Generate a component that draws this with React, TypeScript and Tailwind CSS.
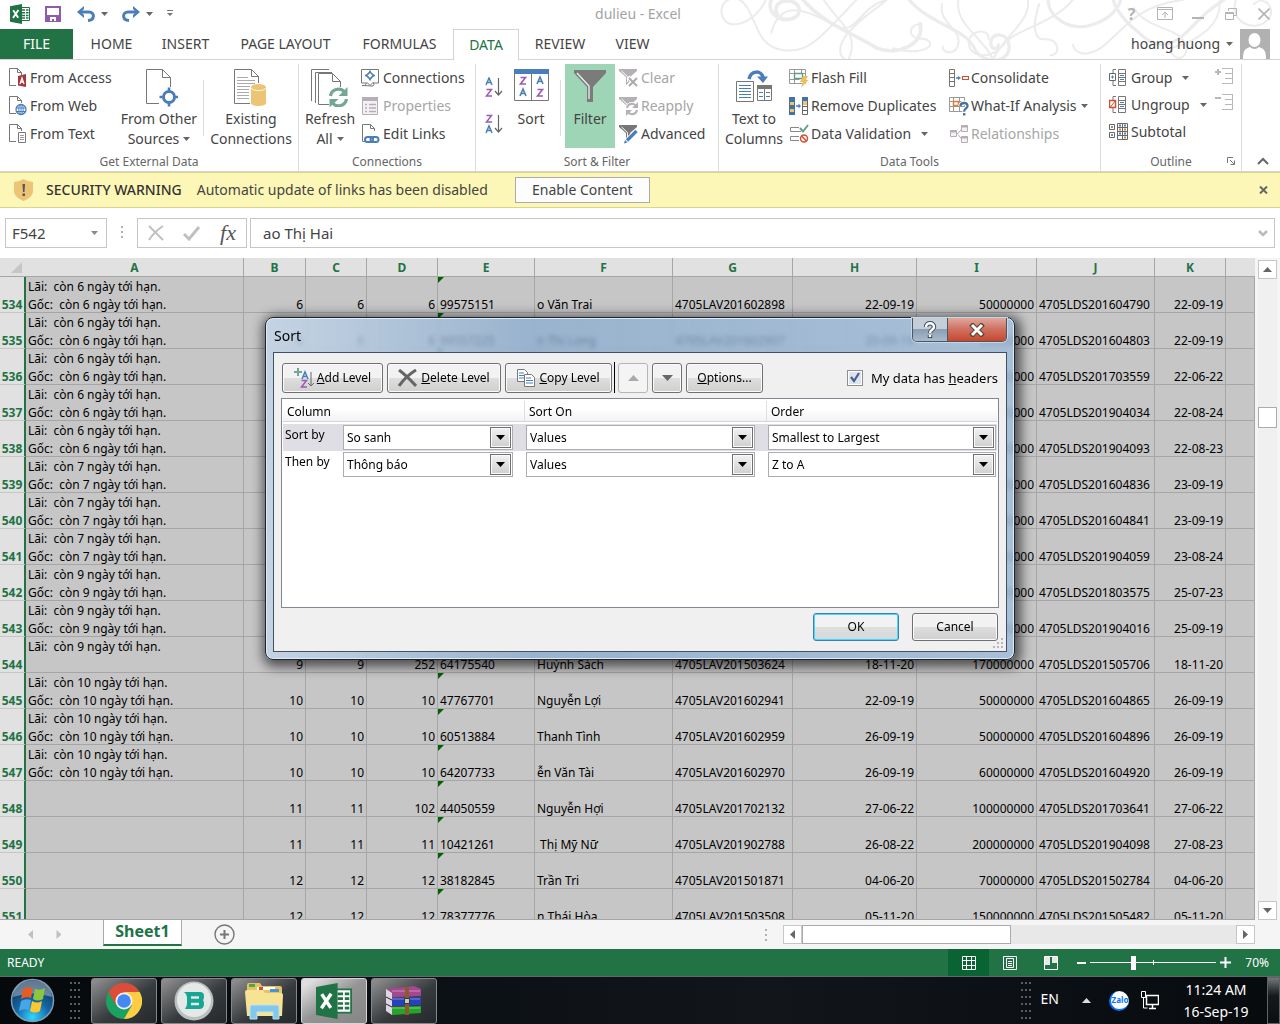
import type { ReactNode } from 'react';

interface SheetRow {
  n: number;
  days?: number;
  only?: boolean;
  cells: string[];
}

const columns = [
  { name: 'A', width: 'w-[218px]' },
  { name: 'B', width: 'w-[62px]' },
  { name: 'C', width: 'w-[61px]' },
  { name: 'D', width: 'w-[71px]' },
  { name: 'E', width: 'w-[97px]' },
  { name: 'F', width: 'w-[138px]' },
  { name: 'G', width: 'w-[120px]' },
  { name: 'H', width: 'w-[124px]' },
  { name: 'I', width: 'w-[120px]' },
  { name: 'J', width: 'w-[118px]' },
  { name: 'K', width: 'w-[71px]' },
];

// Columns B, C, D, H, I and K hold numbers and dates
const rightAligned = [true, true, true, false, false, false, true, true, false, true];

const rows: SheetRow[] = [
  { n: 534, days: 6, cells: ['6', '6', '6', '99575151', 'o Văn Trai', '4705LAV201602898', '22-09-19', '50000000', '4705LDS201604790', '22-09-19'] },
  { n: 535, days: 6, cells: ['6', '6', '6', '99557225', 'n Thị Long', '4705LAV201602907', '20-09-19', '50000000', '4705LDS201604803', '22-09-19'] },
  { n: 536, days: 6, cells: ['', '', '', '', '', '', '', '50000000', '4705LDS201703559', '22-06-22'] },
  { n: 537, days: 6, cells: ['', '', '', '', '', '', '', '50000000', '4705LDS201904034', '22-08-24'] },
  { n: 538, days: 6, cells: ['', '', '', '', '', '', '', '50000000', '4705LDS201904093', '22-08-23'] },
  { n: 539, days: 7, cells: ['', '', '', '', '', '', '', '50000000', '4705LDS201604836', '23-09-19'] },
  { n: 540, days: 7, cells: ['', '', '', '', '', '', '', '50000000', '4705LDS201604841', '23-09-19'] },
  { n: 541, days: 7, cells: ['', '', '', '', '', '', '', '50000000', '4705LDS201904059', '23-08-24'] },
  { n: 542, days: 9, cells: ['', '', '', '', '', '', '', '50000000', '4705LDS201803575', '25-07-23'] },
  { n: 543, days: 9, cells: ['', '', '', '', '', '', '', '50000000', '4705LDS201904016', '25-09-19'] },
  { n: 544, days: 9, only: true, cells: ['9', '9', '252', '64175540', 'Huỳnh Sách', '4705LAV201503624', '18-11-20', '170000000', '4705LDS201505706', '18-11-20'] },
  { n: 545, days: 10, cells: ['10', '10', '10', '47767701', 'Nguyễn Lợi', '4705LAV201602941', '22-09-19', '50000000', '4705LDS201604865', '26-09-19'] },
  { n: 546, days: 10, cells: ['10', '10', '10', '60513884', 'Thanh Tình', '4705LAV201602959', '26-09-19', '50000000', '4705LDS201604896', '26-09-19'] },
  { n: 547, days: 10, cells: ['10', '10', '10', '64207733', 'ễn Văn Tài', '4705LAV201602970', '26-09-19', '60000000', '4705LDS201604920', '26-09-19'] },
  { n: 548, cells: ['11', '11', '102', '44050559', 'Nguyễn Hợi', '4705LAV201702132', '27-06-22', '100000000', '4705LDS201703641', '27-06-22'] },
  { n: 549, cells: ['11', '11', '11', '10421261', ' Thị Mỹ Nữ', '4705LAV201902788', '26-08-22', '200000000', '4705LDS201904098', '27-08-23'] },
  { n: 550, cells: ['12', '12', '12', '38182845', 'Trần Tri', '4705LAV201501871', '04-06-20', '70000000', '4705LDS201502784', '04-06-20'] },
  { n: 551, cells: ['12', '12', '12', '78377776', 'n Thái Hòa', '4705LAV201503508', '05-11-20', '150000000', '4705LDS201505482', '05-11-20'] },
];

/* ---------- icons ---------- */

const Caret = ({ className = 'text-[#666]' }: { className?: string }) => (
  <svg width="7" height="4" viewBox="0 0 7 4" className={`inline-block shrink-0 ${className}`}>
    <path d="M0 0h7L3.5 4z" fill="currentColor" />
  </svg>
);

const ExcelIcon = ({ size }: { size: number }) => (
  <svg width={size} height={size} viewBox="0 0 20 20">
    <path d="M10.5 3.5h9v13h-9z" fill="#fff" stroke="#217346" />
    <path d="M12 6h3M16 6h2.5M12 8.7h3M16 8.7h2.5M12 11.4h3M16 11.4h2.5M12 14h3M16 14h2.5" stroke="#217346" strokeWidth="1.5" />
    <path d="M0 2.2 12 0v20L0 17.8z" fill="#217346" />
    <path d="M3.2 6.2 8.2 13.8M8.4 6 3 14" stroke="#fff" strokeWidth="1.9" />
  </svg>
);

const SmallDoc = ({ children }: { children?: ReactNode }) => (
  <svg width="19" height="20" viewBox="0 0 19 20" fill="none">
    <path d="M8 17.5H1.5V.5h8l4 4V7M9.5.5v4h4" stroke="#777" />
    {children}
  </svg>
);

const AccessIcon = () => (
  <SmallDoc>
    <path d="m10 8 8-2v13l-8-1.500z" fill="#a4373a" />
    <path d="m12 16 2-6 2 6M13 14h2.500" stroke="#fff" strokeWidth="1.300" />
  </SmallDoc>
);

const WebIcon = () => (
  <SmallDoc>
    <circle cx="13" cy="13.500" r="5" fill="#fff" stroke="#4a7ebb" strokeWidth="1.300" />
    <ellipse cx="13" cy="13.500" rx="2.200" ry="5" stroke="#4a7ebb" />
    <path d="M8 12h10M8 15.500h10M13 8.500v10" stroke="#4a7ebb" />
  </SmallDoc>
);

const TextIcon = () => (
  <SmallDoc>
    <path d="M10.500 8.500h7v10h-7z" fill="#fff" stroke="#777" />
    <path d="M12 11.500h4M12 13.500h4M12 15.500h4" stroke="#999" />
  </SmallDoc>
);

const OtherSourcesIcon = () => (
  <svg width="38" height="38" viewBox="0 0 38 38" fill="none">
    <path d="M19 34.500H6.500V.5h16l8 8V18M22.500.5v8h8" stroke="#777" />
    <path d="M29 18.500v19M19.500 28h19" stroke="#4a7ebb" strokeWidth="2.600" />
    <circle cx="29" cy="28" r="5.500" fill="#fff" stroke="#4a7ebb" strokeWidth="3" />
  </svg>
);

const ExistingIcon = () => (
  <svg width="34" height="38" viewBox="0 0 34 38" fill="none">
    <path d="M16 34.500H.5V.5h17l7 7V14M17.500.5v7h7" stroke="#777" />
    <path d="M3 8.500h11M3 11.500h18M3 14.500h18M3 17.500h13M3 20.500h12M3 23.500h12M3 26.500h12M3 29.500h12" stroke="#aaa" />
    <path d="M17 18v16c0 4 15 4 15 0V18" fill="#ebc476" />
    <ellipse cx="24.500" cy="18" rx="7.500" ry="3" fill="#ebc476" />
    <path d="M17 19c2 3.500 13 3.500 15 0" stroke="#fff6df" />
  </svg>
);

const RefreshIcon = () => (
  <svg width="38" height="38" viewBox="0 0 38 38" fill="none">
    <path d="M.5 32V.5H18M4.500 34V3.500H21" stroke="#777" />
    <path d="M18 35.500H7.500v-31h14l8 8V18M21.500 4.500v8h8" stroke="#777" />
    <path d="M19.500 27a8 8 0 0 1 14-4M35.500 30a8 8 0 0 1-14 4" stroke="#72a893" strokeWidth="3.200" />
    <path d="M36.500 18v9h-9zM18.500 38.500v-8.500h9z" fill="#72a893" />
  </svg>
);

const ConnectionsIcon = () => (
  <svg width="18" height="18" viewBox="0 0 18 18" fill="none">
    <path d="M.5 14V.5h17V14H12M5 14H.5" stroke="#777" />
    <path d="m9 3 3.500 3.500L9 10 5.500 6.500z" fill="#fff" stroke="#4a7ebb" strokeWidth="1.600" />
    <path d="M9 1.500v2M9 9.500v2M4 6.500h2M12 6.500h2" stroke="#4a7ebb" strokeWidth="1.500" />
    <path d="M1 16.500h3l2-3 3 3 3-3 1 2-1 1.500z" stroke="#777" />
  </svg>
);

const PropertiesIcon = () => (
  <svg width="18" height="18" viewBox="0 0 18 18" fill="none">
    <path d="M1.500.5h15v17h-15z" fill="#f6f0f6" stroke="#b5aeb5" />
    <path d="M1 0h16v4H1z" fill="#b5aeb5" />
    <path d="M8 7.500h7M8 11h7M8 14.500h7M4 7.500h2M4 11h2M4 14.500h2" stroke="#b5aeb5" strokeWidth="1.500" />
  </svg>
);

const EditLinksIcon = () => (
  <SmallDoc>
    <rect x="4" y="13" width="8" height="5" rx="2.500" fill="#fff" stroke="#4a7ebb" strokeWidth="2" />
    <rect x="9.500" y="13" width="8" height="5" rx="2.500" stroke="#4a7ebb" strokeWidth="2" />
  </SmallDoc>
);

const letterA = 'm1 8 3-7 3 7M2 5.500h4';
const letterZ = 'M1.500 1.500h5l-5 6.500h5.500';

const SortIcon = ({ desc }: { desc?: boolean }) => (
  <svg width="18" height="20" viewBox="0 0 18 20" fill="none">
    <g strokeWidth="1.500">
      <path d={desc ? letterZ : letterA} stroke={desc ? '#9b59b6' : '#4a7ebb'} />
      <path d={desc ? letterA : letterZ} transform="translate(0 11)" stroke={desc ? '#4a7ebb' : '#9b59b6'} />
    </g>
    <path d="M13.500 1v17M10 14l3.500 4 3.500-4" stroke="#666" strokeWidth="1.200" />
  </svg>
);

const BigSortIcon = () => (
  <svg width="35" height="32" viewBox="0 0 35 32" fill="none">
    <path d="M.5 2.500h34v29H.5zM17.500 5v26" stroke="#777" />
    <path d="M0 0h35v5H0z" fill="#4a7ebb" />
    <g strokeWidth="1.600">
      <path d={letterZ} transform="translate(5 7)" stroke="#9b59b6" />
      <path d={letterA} transform="translate(5 19)" stroke="#4a7ebb" />
      <path d={letterA} transform="translate(22 7)" stroke="#4a7ebb" />
      <path d={letterZ} transform="translate(22 19)" stroke="#9b59b6" />
    </g>
  </svg>
);

const FilterIcon = () => (
  <svg width="34" height="34" viewBox="0 0 34 34">
    <path d="M1 1h32v3L20 18v15h-6V18L1 4z" fill="#7b7b7b" />
    <path d="m4 4 12 13v13" fill="none" stroke="#e8f5ee" strokeWidth="1.300" />
  </svg>
);

const Funnel = ({ dim, children }: { dim?: boolean; children: ReactNode }) => (
  <svg width="20" height="20" viewBox="0 0 20 20" fill="none">
    <path d="M0 1h18v2l-7 6v8H7V9L0 3z" fill={dim ? '#b5b0b5' : '#777'} />
    <path d="m2.500 3 6 5.500V14" stroke="#fff" />
    {children}
  </svg>
);

const ClearIcon = () => (
  <Funnel dim>
    <path d="m9 9 9 9M18 9l-9 9" stroke="#fff" strokeWidth="4" />
    <path d="m10 10 8 8M18 10l-8 8" stroke="#aaa" strokeWidth="2" />
  </Funnel>
);

const ReapplyIcon = () => (
  <Funnel dim>
    <circle cx="13" cy="13" r="7" fill="#fff" />
    <path d="M8 12a5 5 0 0 1 9-2M18 14a5 5 0 0 1-9 2" stroke="#b5b0b5" strokeWidth="2" />
    <path d="M19 6v6h-6zM7 20v-6h6z" fill="#b5b0b5" />
  </Funnel>
);

const AdvancedIcon = () => (
  <Funnel>
    <path d="m6.500 18 10-10" stroke="#fff" strokeWidth="5" />
    <path d="m8 16.500 9.500-9.500" stroke="#4a7ebb" strokeWidth="3.200" />
    <path d="m5 19.500 1-3.500 2.500 2.500z" fill="#4a7ebb" />
  </Funnel>
);

const TextToColumnsIcon = () => (
  <svg width="36" height="34" viewBox="0 0 36 34" fill="none">
    <path d="M.5 12.500h17v20H.5z" stroke="#777" />
    <path d="M3 16.500h12M3 19.500h12M3 22.500h12M3 25.500h12M3 28.500h12" stroke="#4a7ebb" />
    <path d="M21.500 17.500h14v14h-14zM28.500 20v11" stroke="#777" />
    <path d="M21 16h15v4H21z" fill="#777" />
    <path d="M23 23.500h4M30 23.500h4M23 27.500h4M30 27.500h4" stroke="#4a7ebb" />
    <path d="M13 10c2-9 13-9 14-1" stroke="#4a7ebb" strokeWidth="3.500" />
    <path d="M21 7.500h11L27 14z" fill="#4a7ebb" />
  </svg>
);

const FlashFillIcon = () => (
  <svg width="20" height="20" viewBox="0 0 20 20" fill="none">
    <path d="M.5 1.500h16v14H.5zM.5 5.500h16M.5 11.500h10M5.500 1.500v14M12.500 1.500v4" stroke="#999" />
    <path d="M5.500 5.500h8v5h-8z" fill="#fff" stroke="#5fa084" strokeWidth="1.400" />
    <path d="M14 8h5l-2 4h2.500L12 20l2-6h-3z" fill="#efbf5e" />
  </svg>
);

const RemoveDuplicatesIcon = () => (
  <svg width="20" height="20" viewBox="0 0 20 20" fill="none">
    <path d="M0 1h6v18H0z" fill="#4472a8" />
    <path d="M1 6h4v3H1zM1 13h4v3H1z" fill="#ebc476" />
    <path d="M7 10h4" stroke="#4a7ebb" strokeWidth="1.500" />
    <path d="M9.500 7.500 12 10l-2.500 2.500z" fill="#4a7ebb" />
    <path d="M13.500 1.500h5v17h-5zM13.500 10.500h5M13.500 14.500h5" stroke="#666" />
    <path d="M13 1h6v4h-6z" fill="#4472a8" />
    <path d="M14 5h4v4h-4z" fill="#ebc476" />
  </svg>
);

const ValidationIcon = () => (
  <svg width="20" height="20" viewBox="0 0 20 20" fill="none">
    <path d="M10 3.500H1.500v4H12M10 12.500H1.500v4H10" stroke="#888" />
    <path d="m11 4 3 3.500L19 1" stroke="#5fa084" strokeWidth="2" />
    <circle cx="15" cy="14.500" r="3.500" stroke="#d2502f" strokeWidth="1.500" />
    <path d="m12.500 12 5 5" stroke="#d2502f" strokeWidth="1.500" />
  </svg>
);

const ConsolidateIcon = () => (
  <svg width="20" height="20" viewBox="0 0 20 20" fill="none">
    <path d="M.5 1.500h5v17h-5zM.5 5.500h5M.5 9.500h5M.5 13.500h5" stroke="#777" />
    <path d="M7 10h3" stroke="#4a7ebb" strokeWidth="1.500" />
    <path d="M9 8l3 2-3 2z" fill="#4a7ebb" />
    <path d="M13.500 8.500h6v3h-6z" stroke="#d2502f" strokeWidth="1.200" />
  </svg>
);

const WhatIfIcon = () => (
  <svg width="20" height="20" viewBox="0 0 20 20" fill="none">
    <path d="M.5 1.500h15v14H.5zM.5 5.500h15M.5 10.500h15M4.500 1.500v14M10.500 1.500v14" stroke="#999" />
    <path d="M4.500 5.500h5v4h-5z" fill="#fff" stroke="#e07b39" strokeWidth="1.500" />
    <path d="M11.500 10c0-4 7.500-4 7 0 0 2.500-3.300 2.500-3.300 5.500" stroke="#fff" strokeWidth="4.500" />
    <path d="M11.500 10c0-4 7.500-4 7 0 0 2.500-3.300 2.500-3.300 5.500M15.200 17v2.500" stroke="#4472a8" strokeWidth="2.300" />
  </svg>
);

const RelationshipsIcon = () => (
  <svg width="20" height="20" viewBox="0 0 20 20" fill="none" stroke="#b5aeb5">
    <path d="M7 9.500h2l4-5M9 10.500l4 5" />
    <path d="M1.500 6.500h6v6h-6zM12.500 1.500h6v6h-6zM12.500 12.500h6v6h-6z" fill="#f6f0f6" />
    <path d="M1.500 7.500h6M12.500 2.500h6M12.500 13.500h6" strokeWidth="2" />
  </svg>
);

const GroupIcon = ({ remove }: { remove?: boolean }) => (
  <svg width="18" height="18" viewBox="0 0 18 18" fill="none">
    <path d="M7 .5H4V4M4 12v4.500h3M9.500.5h7v16h-7zM9.500 4.500h7M9.500 8.500h7M9.500 12.500h7" stroke="#777" />
    <path d="M11 6.500h4M11 10.500h4" stroke="#4a7ebb" />
    <path d="M.5 4.500h6v7h-6z" fill="#fff" stroke={remove ? '#d2502f' : '#666'} strokeWidth={remove ? 1.500 : 1} />
    <path d={remove ? 'M1.500 11 6 5' : 'M2 8h3M3.500 6.500v3'} stroke={remove ? '#d2502f' : '#4a7ebb'} />
  </svg>
);

const SubtotalIcon = () => (
  <svg width="19" height="17" viewBox="0 0 19 17" fill="none">
    <path d="M.5 1.500h5v5h-5zM.5 9.500h5v5h-5zM3 3v2M2 4h2M3 11v2M2 12h2" stroke="#666" />
    <path d="M8.500.5h10v16h-10zM8.500 4.500h10M8.500 8.500h10M8.500 12.500h10M13.500.5v16" stroke="#666" />
    <path d="M10 2.500h2M15 2.500h2M10 10.500h2M15 10.500h2" stroke="#4a7ebb" strokeWidth="2" />
    <path d="M10 6.500h2M15 6.500h2M15 14.500h2" stroke="#e07b39" strokeWidth="2" />
  </svg>
);

const DetailIcon = ({ hide }: { hide?: boolean }) => (
  <svg width="18" height="16" viewBox="0 0 18 16" fill="none" stroke="#b8b8b8">
    <path d={hide ? 'M0 4h6' : 'M0 4h6M3 1v6'} strokeWidth="2" />
    <path d="M7 .5h11M10 5.500h8M10 10.500h8M7 15.500h11M17.500.5v15" />
  </svg>
);

const Ornament = () => (
  <svg viewBox="0 0 1568 147" className="pointer-events-none absolute right-0 top-0 h-[60px] w-[640px]" fill="none" stroke="#ececec" strokeWidth="5" strokeLinecap="round">
    <path d="M308 0C290 40 250 66 220 58 190 48 192 -4 232 -4 262 -2 272 40 294 84 320 134 390 134 430 100 470 66 500 30 530 0" />
    <path d="M360 48c-34 0-38-46 0-46 40 0 40 46 0 46-50-2-56-58-10-70" strokeWidth="9" />
    <path d="M400 0c50 60 140 90 180 118 50 20 120-10 106-60" strokeWidth="9" />
    <path d="M450 0c40 60 90 80 60 148-26-6-24-34-6-60 40-50 70-60 100-88M322 80c20-80 80-60 150-20 60 34 60-40 130-60" />
    <path d="M690 60c-30-4-36 30-10 34 60 0 30 50-60 24" />
    <path d="M660 0c50 60 140 70 160 120 20 40 90 36 84-10-5-36-50-30-44 0 4 14 18 10 18 0" strokeWidth="8" />
    <path d="M1060 0c-50 60-140 70-170 110-30 40-90 30-84-10 6-30 52-30 48-4" />
    <path d="M780 0c-10 60 60 90 84 144M950 0c10 50-60 90-84 144" />
    <path d="M740 10c-10 50 54 60 38 104-10 22-38 16-36 0M978 10c-20 60-10 90 16 86 30-2 40 36 12 40" />
    <path d="M1000 0c0 40 50 80 110 60 60-20 80-70 60-72-30 0 10 60 50 90 50 50 90 30 120 0 40-40 60-60 90-78" strokeWidth="8" />
    <path d="M1060 110c10 30 50 30 90-10 50-50 90-90 180-100M1210 20c40 60 110 40 130 96 0 34-36 34-40 4M1420 0c6 60-50 100-120 118M1460 0c-20 60 60 85 84 40 10-30-20-50-40-30" />
  </svg>
);

/* ---------- ribbon ---------- */

interface CommandProps {
  icon: ReactNode;
  label: string;
  caret?: boolean;
  disabled?: boolean;
  wide?: boolean;
}

const Command = ({ icon, label, caret, disabled, wide }: CommandProps) => (
  <button
    type="button"
    disabled={disabled}
    className={`flex h-7 items-center whitespace-nowrap text-left ${disabled ? 'text-[#a6a6a6]' : 'text-[#444]'}`}
  >
    <span className="flex w-[22px] shrink-0">{icon}</span>
    {label}
    {caret && <Caret className={wide ? 'ml-2.5 text-[#666]' : 'ml-1 text-[#666]'} />}
  </button>
);

interface BigCommandProps {
  icon: ReactNode;
  lines: string[];
  caret?: boolean;
  className?: string;
}

const BigCommand = ({ icon, lines, caret, className = '' }: BigCommandProps) => (
  <button type="button" className={`flex shrink-0 flex-col items-center whitespace-nowrap pt-[5px] text-[#444] ${className}`}>
    <span className="flex h-10 items-start justify-center">{icon}</span>
    {lines.map((line, i) => (
      <span key={line} className="flex h-5 items-center gap-1 leading-5">
        {line}
        {caret && i === lines.length - 1 && <Caret />}
      </span>
    ))}
  </button>
);

const Group = ({ title, className, children }: { title: string; className: string; children: ReactNode }) => (
  <section className={`relative flex shrink-0 flex-col border-r border-[#dcdcdc] ${className}`}>
    <div className="flex h-[88px] items-start">{children}</div>
    <div className="h-[18px] text-center text-xs leading-5 text-[#666]">{title}</div>
  </section>
);

const Divider = () => <div className="mt-4 h-14 w-px bg-[#dcdcdc]" />;

const Ribbon = () => (
  <div className="flex h-[112px] border-b border-[#d4d4d4] bg-white pt-1 text-sm">
    <Group title="Get External Data" className="w-[299px]">
      <div className="w-[120px] pl-2">
        <Command icon={<AccessIcon />} label="From Access" />
        <Command icon={<WebIcon />} label="From Web" />
        <Command icon={<TextIcon />} label="From Text" />
      </div>
      <BigCommand icon={<OtherSourcesIcon />} lines={['From Other', 'Sources']} caret className="w-[78px]" />
      <div className="w-[5px]" />
      <Divider />
      <BigCommand icon={<ExistingIcon />} lines={['Existing', 'Connections']} className="w-[94px]" />
    </Group>
    <Group title="Connections" className="w-[177px]">
      <BigCommand icon={<RefreshIcon />} lines={['Refresh', 'All']} caret className="w-[62px]" />
      <div>
        <Command icon={<ConnectionsIcon />} label="Connections" />
        <Command icon={<PropertiesIcon />} label="Properties" disabled />
        <Command icon={<EditLinksIcon />} label="Edit Links" />
      </div>
    </Group>
    <Group title="Sort & Filter" className="w-[243px]">
      <div className="flex w-9 flex-col items-center gap-[17px] pt-[13px]">
        <button type="button" aria-label="Sort A to Z"><SortIcon /></button>
        <button type="button" aria-label="Sort Z to A"><SortIcon desc /></button>
      </div>
      <BigCommand icon={<BigSortIcon />} lines={['Sort']} className="w-[38px]" />
      <div className="w-2.5" />
      <Divider />
      <BigCommand icon={<FilterIcon />} lines={['Filter']} className="ml-1 h-[84px] w-[50px] bg-[#9fd5b7]" />
      <div className="pl-1">
        <Command icon={<ClearIcon />} label="Clear" disabled />
        <Command icon={<ReapplyIcon />} label="Reapply" disabled />
        <Command icon={<AdvancedIcon />} label="Advanced" />
      </div>
    </Group>
    <Group title="Data Tools" className="w-[382px]">
      <BigCommand icon={<TextToColumnsIcon />} lines={['Text to', 'Columns']} className="w-[70px]" />
      <div className="w-[160px]">
        <Command icon={<FlashFillIcon />} label="Flash Fill" />
        <Command icon={<RemoveDuplicatesIcon />} label="Remove Duplicates" />
        <Command icon={<ValidationIcon />} label="Data Validation" caret wide />
      </div>
      <div>
        <Command icon={<ConsolidateIcon />} label="Consolidate" />
        <Command icon={<WhatIfIcon />} label="What-If Analysis" caret />
        <Command icon={<RelationshipsIcon />} label="Relationships" disabled />
      </div>
    </Group>
    <Group title="Outline" className="w-[141px]">
      <div className="flex w-[114px] flex-col pl-2 *:h-[27px]">
        <Command icon={<GroupIcon />} label="Group" caret wide />
        <Command icon={<GroupIcon remove />} label="Ungroup" caret wide />
        <Command icon={<SubtotalIcon />} label="Subtotal" />
      </div>
      <div className="flex flex-col gap-2.5 pt-1">
        <DetailIcon />
        <DetailIcon hide />
      </div>
      <svg width="8" height="8" viewBox="0 0 8 8" className="absolute bottom-1.5 right-1.5" fill="none" stroke="#777">
        <path d="M.5 6V.5H6M3 3l4 4M7.500 3.500v4h-4" />
      </svg>
    </Group>
    <button type="button" aria-label="Collapse the ribbon" className="flex flex-1 items-end justify-center pb-1.5 pl-1">
      <svg width="12" height="8" viewBox="0 0 12 8" fill="none" stroke="#666" strokeWidth="2">
        <path d="m1 7 5-5 5 5" />
      </svg>
    </button>
  </div>
);

const tabs = [
  { name: 'HOME', width: 'w-[77px]' },
  { name: 'INSERT', width: 'w-[71px]' },
  { name: 'PAGE LAYOUT', width: 'w-[129px]' },
  { name: 'FORMULAS', width: 'w-[99px]' },
  { name: 'DATA', width: 'w-[66px] ml-1' },
  { name: 'REVIEW', width: 'w-[82px]' },
  { name: 'VIEW', width: 'w-[63px]' },
];

const TitleBar = () => (
  <header className="relative bg-white">
    <Ornament />
    <div className="relative flex h-[29px] items-center pb-0.5 pl-2.5 text-sm">
      <ExcelIcon size={20} />
      <button type="button" aria-label="Save" className="ml-[15px]">
        <svg width="16" height="16" viewBox="0 0 16 16" fill="none">
          <path d="M1 1h14v14H1z" fill="#fff" stroke="#8e5bae" strokeWidth="2" />
          <path d="M1 9h14v6H1z" fill="#8e5bae" />
          <path d="M5 11h6v4H9v-2H7v2H5z" fill="#fff" />
        </svg>
      </button>
      <button type="button" aria-label="Undo" className="ml-4 flex items-center gap-1.5">
        <svg width="18" height="16" viewBox="0 0 18 16" fill="none">
          <path d="M2 6h10c6 0 6 8-1 8.500" stroke="#4a7ebb" strokeWidth="3" />
          <path d="M0 6 7 0v3L4 6l3 3v3z" fill="#4a7ebb" />
        </svg>
        <Caret />
      </button>
      <button type="button" aria-label="Redo" className="ml-3.5 flex items-center gap-1.5">
        <svg width="18" height="16" viewBox="0 0 18 16" fill="none">
          <path d="M16 6H6C0 6 0 14 7 14.500" stroke="#4a7ebb" strokeWidth="3" />
          <path d="m18 6-7-6v3l3 3-3 3v3z" fill="#4a7ebb" />
        </svg>
        <Caret />
      </button>
      <svg width="6" height="7" viewBox="0 0 6 7" className="ml-3.5">
        <path d="M0 0h6v1H0zM0 3h6L3 6z" fill="#777" />
      </svg>
      <h1 className="absolute inset-x-0 pr-1 text-center text-[#a3a3a3]">dulieu - Excel</h1>
      <div className="ml-auto flex items-center text-[#b4b4b4] *:flex *:w-[33px] *:justify-center">
        <button type="button" className="text-base font-bold leading-4">?</button>
        <button type="button" aria-label="Ribbon display options">
          <svg width="16" height="13" viewBox="0 0 16 13" fill="none" stroke="currentColor">
            <path d="M.5.5h15v12H.5zM.5 2.500h15M8 11V5M5 8l3-3 3 3" />
          </svg>
        </button>
        <button type="button" aria-label="Minimize">
          <svg width="12" height="12" viewBox="0 0 12 12"><path d="M0 9h12v2H0z" fill="currentColor" /></svg>
        </button>
        <button type="button" aria-label="Restore">
          <svg width="12" height="12" viewBox="0 0 12 12" fill="none" stroke="currentColor">
            <path d="M3.500 3V.5h8v7H9M.5 4.500h8v7h-8zM.5 5.500h8" />
          </svg>
        </button>
        <button type="button" aria-label="Close">
          <svg width="12" height="12" viewBox="0 0 12 12" fill="none" stroke="currentColor" strokeWidth="1.600">
            <path d="m.5.5 11 11M11.500.5l-11 11" />
          </svg>
        </button>
      </div>
    </div>
    <nav className="relative flex h-[31px] border-b border-[#d4d4d4] text-sm text-[#444]">
      <button type="button" className="w-[73px] bg-[#217346] text-white">FILE</button>
      {tabs.map((tab) => (
        <button
          key={tab.name}
          type="button"
          className={`whitespace-nowrap ${tab.width} ${tab.name === 'DATA' ? '-mb-px border border-b-0 border-[#d4d4d4] bg-white text-[#217346]' : ''}`}
        >
          {tab.name}
        </button>
      ))}
      <button type="button" className="ml-auto flex items-center gap-1.5 pr-2.5">
        hoang huong <Caret />
        <svg width="30" height="30" viewBox="0 0 30 30" className="ml-px">
          <path d="M0 0h30v30H0z" fill="#b1b1b1" />
          <ellipse cx="14.500" cy="11" rx="6" ry="7" fill="#fff" />
          <path d="M3 30c0-9 2-10 7-12q4.500 4 9 0c5 2 7 3 7 12z" fill="#fff" />
        </svg>
      </button>
    </nav>
  </header>
);

const SecurityBar = () => (
  <div className="flex h-9 items-center border-y border-[#d9d58a] bg-[#fcf7b6] pl-[14px] pr-3 text-sm text-[#444]">
    <svg width="19" height="22" viewBox="0 0 19 22">
      <path d="M9.500 0Q14 3 19 3v9c0 5-5 8-9.500 10C5 20 0 17 0 12V3q5 0 9.500-3z" fill="#ebc476" />
      <path d="M8.500 5h2.500l-.5 8H9zM8.500 14.500h2.500V17H8.500z" fill="#555" />
    </svg>
    <span className="ml-[13px] font-medium text-[#333]">SECURITY WARNING</span>
    <span className="ml-[15px]">Automatic update of links has been disabled</span>
    <button type="button" className="ml-[27px] h-[26px] w-[135px] border border-[#ababab] bg-[#fdfdfd]">Enable Content</button>
    <button type="button" aria-label="Close message" className="ml-auto">
      <svg width="9" height="8" viewBox="0 0 9 8" fill="none" stroke="#666" strokeWidth="2">
        <path d="m1 .5 7 7M8 .5l-7 7" />
      </svg>
    </button>
  </div>
);

const FormulaBar = () => (
  <div className="flex h-[50px] items-center bg-white px-[5px] text-[15px] text-[#444]">
    <div className="flex h-[30px] w-[102px] items-center border border-[#c6c6c6] pr-2">
      <input aria-label="Name box" defaultValue="F542" className="w-full min-w-0 flex-1 pl-1.5 outline-none" />
      <Caret className="text-[#888]" />
    </div>
    <svg width="3" height="14" viewBox="0 0 3 14" className="mx-[14px]">
      <path d="M0 0h2v2H0zM0 5h2v2H0zM0 10h2v2H0z" fill="#b0b0b0" />
    </svg>
    <div className="-ml-px flex h-[30px] w-[110px] items-center justify-between border border-[#c6c6c6] px-2.5">
      <svg width="16" height="16" viewBox="0 0 16 16" fill="none" stroke="#c0c0c0" strokeWidth="2">
        <path d="M1 1q6 6 14 14M15 1Q6 7 1 15" />
      </svg>
      <svg width="18" height="15" viewBox="0 0 18 15" fill="none" stroke="#c0c0c0" strokeWidth="3">
        <path d="m1 8 5 5L16 1" />
      </svg>
      <span className="font-['Liberation_Serif',serif] text-[22px] italic leading-5 text-[#555]">fx</span>
    </div>
    <div className="ml-[3px] flex h-[30px] flex-1 items-center border border-[#c6c6c6] pr-1.5">
      <input aria-label="Formula bar" defaultValue="ao Thị Hai" className="flex-1 pl-3 outline-none" />
      <svg width="10" height="7" viewBox="0 0 10 7" fill="none" stroke="#bbb" strokeWidth="2.500">
        <path d="m1 1 4 4 4-4" />
      </svg>
    </div>
  </div>
);

/* ---------- sheet ---------- */

const ScrollArrow = ({ d, label }: { d: string; label: string }) => (
  <button type="button" aria-label={label} className="flex h-[19px] w-[19px] shrink-0 items-center justify-center border border-[#c6c6c6] bg-white">
    <svg width="9" height="9" viewBox="0 0 9 9"><path d={d} fill="#666" /></svg>
  </button>
);

const Sheet = () => (
  <div className="flex min-h-0 flex-1 bg-[#f5f5f5]">
    <div className="min-w-0 flex-1 overflow-hidden border-b border-[#a6a6a6]">
      <table className="w-full table-fixed border-separate border-spacing-0 text-xs text-black">
        <colgroup>
          <col className="w-[26px]" />
          {columns.map((col) => <col key={col.name} className={col.width} />)}
          <col />
        </colgroup>
        <thead>
          <tr className="h-[19px] bg-[#e1e1e1] leading-4 text-[#217346]">
            <th className="border-b border-[#a6a6a6] p-0">
              <svg width="11" height="11" viewBox="0 0 11 11" className="ml-auto mr-1"><path d="M11 0v11H0z" fill="#c6c6c6" /></svg>
            </th>
            {columns.map((col) => (
              <th key={col.name} className="border-b border-r border-[#a6a6a6] p-0 pt-0.5 font-bold">{col.name}</th>
            ))}
            <th className="border-b border-[#a6a6a6] p-0" />
          </tr>
        </thead>
        <tbody>
          {rows.map((row) => (
            <tr key={row.n} className="h-9 bg-[#c6c6c6] align-bottom leading-[14px]">
              <th className="border-b border-r-2 border-b-[#c6c6c6] border-r-[#217346] bg-[#e1e1e1] p-0 font-bold text-[#217346]">{row.n}</th>
              <td className="whitespace-pre border-b border-r border-[#a6a6a6] p-0 pl-0.5">
                {row.days && (
                  <div className="flex flex-col gap-1">
                    <span>{`Lãi:  còn ${row.days} ngày tới hạn.`}</span>
                    <span className="h-[14px]">{row.only ? '' : `Gốc:  còn ${row.days} ngày tới hạn.`}</span>
                  </div>
                )}
              </td>
              {row.cells.map((cell, i) => (
                <td
                  key={i}
                  className={`relative whitespace-pre border-b border-r border-[#a6a6a6] p-0 px-0.5 ${rightAligned[i] ? 'text-right' : ''}`}
                >
                  {i === 3 && (
                    <svg width="6" height="6" viewBox="0 0 6 6" className="absolute left-0 top-0"><path d="M0 0h6L0 6z" fill="#006100" /></svg>
                  )}
                  {cell}
                </td>
              ))}
              <td className="border-b border-r border-[#a6a6a6]" />
            </tr>
          ))}
        </tbody>
      </table>
    </div>
    <div className="flex w-[25px] flex-col px-[3px] pt-0.5">
      <ScrollArrow d="M0 7h9L4.500 2z" label="Scroll up" />
      <div className="flex flex-1 flex-col bg-[#f0f0f0] pt-32">
        <div className="h-[21px] w-[19px] border border-[#ababab] bg-white" />
      </div>
      <ScrollArrow d="M0 2h9L4.500 7z" label="Scroll down" />
    </div>
  </div>
);

const SheetTabs = () => (
  <div className="flex h-[29px] shrink-0 items-center bg-[#f5f5f5] pr-[25px]">
    <svg width="33" height="9" viewBox="0 0 33 9" className="ml-7">
      <path d="M5 0v9L0 4.500zM28.500 0v9l5-4.500z" fill="#c0c0c0" />
    </svg>
    <button type="button" className="ml-[42px] h-[26px] w-[79px] self-start border-x border-b-2 border-x-[#ababab] border-b-[#217346] bg-white pb-0.5 text-base font-bold leading-5 text-[#217346]">
      Sheet1
    </button>
    <button type="button" aria-label="New sheet" className="ml-8">
      <svg width="21" height="21" viewBox="0 0 21 21" fill="none" stroke="#777">
        <circle cx="10.500" cy="10.500" r="9.500" strokeWidth="1.400" />
        <path d="M10.500 6v9M6 10.500h9" strokeWidth="2" />
      </svg>
    </button>
    <svg width="3" height="12" viewBox="0 0 3 12" className="ml-auto mr-[15px]">
      <path d="M0 0h2v2H0zM0 5h2v2H0zM0 10h2v2H0z" fill="#b0b0b0" />
    </svg>
    <div className="flex w-[472px] bg-[#e8e8e8]">
      <ScrollArrow d="M7 0v9L2 4.500z" label="Scroll left" />
      <div className="flex-1">
        <div className="h-[19px] w-[209px] border border-[#ababab] bg-white" />
      </div>
      <ScrollArrow d="M2 0v9l5-4.500z" label="Scroll right" />
    </div>
  </div>
);

const StatusBar = () => (
  <footer className="flex h-[27px] shrink-0 items-center bg-[#217346] pl-[7px] pr-[11px] text-xs text-white">
    <span>READY</span>
    <div className="ml-auto flex h-full items-center">
      <button type="button" aria-label="Normal view" className="flex h-full w-[41px] items-center justify-center bg-[#0a6332]">
        <svg width="14" height="14" viewBox="0 0 14 14" fill="none" stroke="#fff">
          <path d="M.5.5h13v13H.5zM.5 4.500h13M.5 9.500h13M4.500.5v13M9.500.5v13" />
        </svg>
      </button>
      <button type="button" aria-label="Page layout" className="flex w-[41px] justify-center">
        <svg width="14" height="14" viewBox="0 0 14 14" fill="none" stroke="#fff">
          <path d="M.5.5h13v13H.5zM3.500 2.500h7v9h-7zM5 5.500h4M5 7.500h4M5 9.500h4" />
        </svg>
      </button>
      <button type="button" aria-label="Page break preview" className="flex w-[41px] justify-center">
        <svg width="14" height="14" viewBox="0 0 14 14" fill="none" stroke="#fff">
          <path d="M.5.5h13v13H.5z" />
          <path d="M1 1h5v8H1zM8 1h5v6H8z" fill="#e8e8e8" stroke="none" />
        </svg>
      </button>
      <svg width="9" height="2" viewBox="0 0 9 2" className="ml-1.5"><path d="M0 0h9v2H0z" fill="#fff" /></svg>
      <div className="relative mx-1 flex items-center">
        <input
          type="range"
          aria-label="Zoom"
          min={0}
          max={100}
          defaultValue={34}
          className="h-px w-[126px] appearance-none bg-white [&::-webkit-slider-thumb]:h-[14px] [&::-webkit-slider-thumb]:w-[5px] [&::-webkit-slider-thumb]:appearance-none [&::-webkit-slider-thumb]:bg-white"
        />
        <span className="absolute left-1/2 h-[5px] w-px bg-white" />
      </div>
      <svg width="11" height="11" viewBox="0 0 11 11"><path d="M0 4.500h11v2H0zM4.500 0h2v11h-2z" fill="#fff" /></svg>
      <span className="ml-3.5">70%</span>
    </div>
  </footer>
);

/* ---------- dialog ---------- */

const dialogButton =
  'flex h-[30px] items-center justify-center rounded-[3px] border border-[#707070] bg-linear-to-b from-[#f2f2f2] from-50% via-[#dedede] via-50% to-[#cfcfcf] shadow-[inset_0_0_0_1px_#fbfbfb]';

const Combo = ({ label, value, className }: { label: string; value: string; className: string }) => (
  <div className={`relative h-[25px] ${className}`}>
    <select aria-label={label} defaultValue={value} className="h-full w-full appearance-none border border-[#abadb3] bg-white pl-[3px] outline-none">
      <option>{value}</option>
    </select>
    <span className="pointer-events-none absolute right-0.5 top-0.5 flex h-[21px] w-[21px] items-center justify-center border border-[#707070] bg-linear-to-b from-[#f2f2f2] to-[#cfcfcf] shadow-[inset_0_0_0_1px_#fbfbfb]">
      <svg width="9" height="5" viewBox="0 0 9 5"><path d="M0 0h9L4.500 5z" /></svg>
    </span>
  </div>
);

const SortLevel = ({ label, column, order, active }: { label: string; column: string; order: string; active?: boolean }) => (
  <div className={`flex h-[27px] pt-px ${active ? 'bg-[#dfdee4]' : ''}`}>
    <span className="w-[60px] pl-0.5 leading-5">{label}</span>
    <Combo label="Column" value={column} className="w-[170px]" />
    <Combo label="Sort On" value="Values" className="ml-[13px] w-[229px]" />
    <Combo label="Order" value={order} className="ml-[13px] w-[228px]" />
  </div>
);

const SortDialog = () => (
  <div
    role="dialog"
    aria-label="Sort"
    className="absolute left-1/2 top-[317px] w-[750px] -translate-x-1/2 rounded-lg border border-[#1d2530] bg-linear-to-r from-[#c4d6e8]/85 via-[#8cadd0]/75 via-35% to-[#9fbddb]/80 px-[7px] pb-[7px] text-xs text-black shadow-[inset_0_0_0_1px_#dcebf5,2px_3px_12px_4px_rgba(0,0,0,0.6)] backdrop-blur-[2px]"
  >
    <div className="flex h-[34px] items-start justify-between">
      <h2 className="pl-px pt-2 text-sm">Sort</h2>
      <div className="flex h-6 overflow-hidden rounded-b-[5px] border border-t-0 border-[#4c5663] shadow-[0_0_0_1px_#c5d6e5]">
        <button type="button" aria-label="Help" className="w-[35px] border-r border-[#4c5663] bg-linear-to-b from-[#c3ced9] from-50% via-[#8b9fb3] via-50% to-[#a9bccd]">
          <svg width="14" height="18" viewBox="0 0 14 18" className="mx-auto" fill="none">
            <path d="M3 6c0-5 8-5 8 0 0 3-4 2.500-4 6M7 14v3" stroke="#414b59" strokeWidth="4.500" />
            <path d="M3 6c0-5 8-5 8 0 0 3-4 2.500-4 6M7 13.500v2.500" stroke="#fff" strokeWidth="2.500" />
          </svg>
        </button>
        <button type="button" aria-label="Close" className="w-[58px] bg-linear-to-b from-[#dfa99e] from-0% via-[#cf7364] via-45% to-[#c9452c]">
          <svg width="16" height="14" viewBox="0 0 16 14" className="mx-auto" fill="none">
            <path d="m2 1 12 12M14 1 2 13" stroke="#543" strokeWidth="5" />
            <path d="m3 2 10 10M13 2 3 12" stroke="#fff" strokeWidth="3" />
          </svg>
        </button>
      </div>
    </div>
    <div className="relative border border-[#454f5e] bg-[#f0f0f0] px-2 pb-2.5 pt-[9px]">
      <div className="flex items-center">
        <button type="button" className={`${dialogButton} w-[101px] gap-0.5`}>
          <svg width="21" height="20" viewBox="0 0 21 20" fill="none">
            <path d="M0 4h8M4 0v8" stroke="#72a893" strokeWidth="2" />
            <path d={letterA} transform="translate(7 3)" stroke="#4a7ebb" strokeWidth="1.500" />
            <path d={letterZ} transform="translate(6 11)" stroke="#9b59b6" strokeWidth="1.500" />
            <path d="M17 4v14M14 15l3 3 3-3" stroke="#666" />
          </svg>
          <span><u>A</u>dd Level</span>
        </button>
        <button type="button" className={`${dialogButton} ml-1 w-[114px] gap-1`}>
          <svg width="19" height="18" viewBox="0 0 19 18" fill="none" stroke="#666" strokeWidth="3">
            <path d="M1 1q8 6 17 16M18 1Q8 7 1 17" />
          </svg>
          <span><u>D</u>elete Level</span>
        </button>
        <button type="button" className={`${dialogButton} ml-1 w-[107px] gap-1`}>
          <svg width="18" height="18" viewBox="0 0 18 18" stroke="#777" fill="#fff">
            <path d="M.5.5h7l3 3v9H.5z" />
            <path d="M2 4h5M2 6.500h5M2 9h5" stroke="#4a7ebb" />
            <path d="M7.500 5.500h7l3 3v9h-10z" />
            <path d="M9 9h5M9 11.500h7M9 14h7" stroke="#4a7ebb" />
          </svg>
          <span><u>C</u>opy Level</span>
        </button>
        <span className="ml-0.5 h-[31px] w-px bg-black" />
        <button type="button" aria-label="Move up" disabled className="ml-[3px] flex h-[30px] w-[30px] items-center justify-center rounded-[3px] border border-[#b5b5b5] bg-[#f4f4f4]">
          <svg width="11" height="6" viewBox="0 0 11 6"><path d="M0 6h11L5.500 0z" fill="#aaa" /></svg>
        </button>
        <button type="button" aria-label="Move down" className={`${dialogButton} ml-1 w-[30px]`}>
          <svg width="11" height="6" viewBox="0 0 11 6"><path d="M0 0h11L5.500 6z" fill="#666" /></svg>
        </button>
        <button type="button" className={`${dialogButton} ml-1 w-[77px]`}><span><u>O</u>ptions...</span></button>
        <label className="ml-auto flex items-center gap-2 whitespace-nowrap">
          <input type="checkbox" defaultChecked className="peer sr-only" />
          <span className="flex h-4 w-4 items-center justify-center border border-[#8e8f8f] bg-[#dfe3ea] shadow-[inset_0_0_0_1px_#fff]">
            <svg width="10" height="11" viewBox="0 0 10 11" fill="none"><path d="m1 5 3 4 5-8" stroke="#4a5f97" strokeWidth="2.200" /></svg>
          </span>
          <span className="text-[13px] leading-4">My data has <u>h</u>eaders</span>
        </label>
      </div>
      <div className="-mx-px mt-[5px] h-[210px] border border-[#828790] bg-white px-px pt-0.5">
        <div className="flex h-[21px] border-b border-[#d5d5d5] bg-linear-to-b from-white from-40% to-[#f1f2f4] leading-[22px]">
          <span className="w-[242px] border-r border-[#dedfe1] pl-1">Column</span>
          <span className="w-[242px] border-r border-[#dedfe1] pl-1">Sort On</span>
          <span className="flex-1 pl-1">Order</span>
        </div>
        <div className="h-0.5" />
        <SortLevel label="Sort by" column="So sanh" order="Smallest to Largest" active />
        <SortLevel label="Then by" column="Thông báo" order="Z to A" />
      </div>
      <div className="mt-[5px] flex justify-end gap-[13px]">
        <button type="button" className="h-7 w-[86px] rounded-[3px] border border-[#3c7fb1] bg-linear-to-b from-[#f2f2f2] from-50% via-[#dedede] via-50% to-[#d3d9dd] shadow-[inset_0_0_0_1px_#48d8fb]">OK</button>
        <button type="button" className="h-7 w-[86px] rounded-[3px] border border-[#707070] bg-linear-to-b from-[#f2f2f2] from-50% via-[#dedede] via-50% to-[#cfcfcf] shadow-[inset_0_0_0_1px_#fbfbfb]">Cancel</button>
      </div>
      <svg width="12" height="12" viewBox="0 0 12 12" className="absolute bottom-0.5 right-0.5">
        <path d="M9 1h2v2H9zM5 5h2v2H5zM9 5h2v2H9zM1 9h2v2H1zM5 9h2v2H5zM9 9h2v2H9z" fill="#b8b8b8" />
      </svg>
    </div>
  </div>
);

/* ---------- taskbar ---------- */

const Grip = () => (
  <svg width="10" height="38" viewBox="0 0 10 38" className="shrink-0">
    {[0, 7, 14, 21, 28, 35].map((y) => (
      <path key={y} d={`M0 ${y}h2v2H0zM4 ${y}h2v2H4zM8 ${y}h2v2H8z`} fill="#5a5d60" />
    ))}
  </svg>
);

const ChromeIcon = () => (
  <svg width="36" height="36" viewBox="0 0 36 36">
    <circle cx="18" cy="18" r="18" fill="#1aa260" />
    <path d="M2.400 9A18 18 0 0 1 33.600 9H18L10.200 22.500z" fill="#dd4b39" />
    <path d="M33.600 9A18 18 0 0 1 18 36l7.800-13.500L18 9z" fill="#ffcd41" />
    <circle cx="18" cy="18" r="8.500" fill="#f1f1f1" />
    <circle cx="18" cy="18" r="6.800" fill="#4587f3" />
  </svg>
);

const RoundBIcon = () => (
  <svg width="40" height="40" viewBox="0 0 40 40">
    <circle cx="20" cy="20" r="19.500" fill="#b9c0bf" />
    <circle cx="20" cy="19" r="17" fill="#e4e8e7" />
    <path d="M10 11h16q4 0 4 4 0 3-1 4 1 1 1 4 0 5-5 5H11q2-3 2-5v-7q0-3-3-5z" fill="#17a594" />
    <path d="M17 16.500h8M17 23h8" stroke="#e4e8e7" strokeWidth="2.500" />
  </svg>
);

const FolderIcon = () => (
  <svg width="40" height="38" viewBox="0 0 40 38">
    <path d="M3 3q0-2 2-2h11l2 3h18q2 0 2 2v26H3z" fill="#e5c262" />
    <path d="M5 2h6v3H5z" fill="#54a34d" />
    <path d="M13 5h18v3H13z" fill="#fff" />
    <path d="M15 5h4v3h-4z" fill="#d2502f" />
    <path d="M26 7h9v3h-9z" fill="#4b94cf" />
    <path d="M1 10q0-2 2-2h16l2 3h16q2 0 2 2l-1 21H3z" fill="#f6e394" />
    <path d="M6 37V25q0-2 2-2h25q2 0 2 2v12h-6v-7H13v7z" fill="#83c8ea" stroke="#b9e3f6" />
  </svg>
);

const ArchiveIcon = () => (
  <svg width="36" height="30" viewBox="0 0 36 30">
    <path d="M1 3 28 0l7 3v7L6 11z" fill="#a4478f" />
    <path d="m6 12 29-1v8l-29 1z" fill="#2740bd" />
    <path d="m6 21 29-1v7l-29 2z" fill="#24a52a" />
    <path d="M0 3l6 4v22l-6-4z" fill="#ded6e6" />
    <path d="m0 11 6 3M0 18l6 3" stroke="#222" />
    <path d="M6 5h28M6 13h28M6 22h28" stroke="#fff" strokeOpacity=".4" />
    <path d="M19 1h4v28h-4z" fill="#8a5a2b" />
    <path d="M18.500 12.500h5v5h-5z" fill="#ccc" stroke="#333" />
  </svg>
);

const apps = [
  { name: 'Chrome', icon: <ChromeIcon /> },
  { name: 'B', icon: <RoundBIcon /> },
  { name: 'Explorer', icon: <FolderIcon /> },
  { name: 'Excel', icon: <ExcelIcon size={36} />, active: true },
  { name: 'WinRAR', icon: <ArchiveIcon /> },
];

const Taskbar = () => (
  <div className="flex h-12 shrink-0 items-center border-t border-[#5e6a6d] bg-linear-to-r from-[#05090c] via-[#12161b] via-60% to-[#070b0e] pl-2.5 text-white">
    <button type="button" aria-label="Start" className="shrink-0">
      <svg width="45" height="45" viewBox="0 0 45 45">
        <defs>
          <radialGradient id="orb" cx="50%" cy="90%" r="80%">
            <stop offset="0" stopColor="#35d6ff" />
            <stop offset=".5" stopColor="#1467a5" />
            <stop offset="1" stopColor="#123458" />
          </radialGradient>
        </defs>
        <circle cx="22.500" cy="22.500" r="21" fill="url(#orb)" stroke="#7e9fb3" strokeWidth="1.500" />
        <path d="M3 19C5-3 40-3 42 19q-20-7-39 0z" fill="#fff" fillOpacity=".35" />
        <path d="M13 11q5-3 10-1l-2 10q-5-2-10 1z" fill="#ec5a24" />
        <path d="M25 11q5 2 10-1l-2 11q-5 3-10 0z" fill="#8cc63f" />
        <path d="M11 23q5-3 10-1l-2 10q-5-2-10 1z" fill="#47a5e8" />
        <path d="M22 23q5 3 10 0l-2 10q-5 3-10 0z" fill="#fdc72f" />
      </svg>
    </button>
    <div className="ml-[15px] flex"><Grip /></div>
    <div className="ml-[11px] flex gap-1">
      {apps.map((app) => (
        <button
          key={app.name}
          type="button"
          aria-label={app.name}
          className={`flex h-[46px] w-[66px] items-center justify-center rounded-[3px] border bg-linear-to-br ${
            app.active
              ? 'border-[#d6d6d6] from-[#dedede] from-10% via-[#949494] via-50% to-[#858585]'
              : 'border-[#85888a] from-[#8b8b8b] from-5% via-[#383b3e] via-55% to-[#26292c]'
          }`}
        >
          {app.icon}
        </button>
      ))}
    </div>
    <div className="ml-auto flex h-full items-center">
      <Grip />
      <span className="ml-2.5 pb-1 text-sm">EN</span>
      <svg width="9" height="5" viewBox="0 0 9 5" className="ml-[23px]"><path d="M0 5h9L4.500 0z" fill="#ddd" /></svg>
      <span className="ml-[18px] flex h-5 w-5 items-center justify-center rounded-full border-b-2 border-l-2 border-[#0573ff] bg-white text-[8px] font-bold leading-none text-[#0573ff]">Zalo</span>
      <svg width="18" height="19" viewBox="0 0 18 19" className="ml-3" fill="none" stroke="#fff">
        <path d="M5.500 4.500h12v9h-12zM11.500 14v3M8 17.500h7" strokeWidth="1.500" />
        <path d="M.5.500h4v6h-4zM2.500 7v10h4" />
      </svg>
      <div className="ml-4 w-[82px] text-center text-sm leading-[22px]">
        <div>11:24 AM</div>
        <div>16-Sep-19</div>
      </div>
      <button type="button" aria-label="Show desktop" className="ml-2.5 h-full w-[13px] border border-[#5e6366] bg-linear-to-b from-[#74787a] via-[#15191c] via-40% to-[#0b0f12]" />
    </div>
  </div>
);

const App = () => (
  <div className="relative flex h-screen min-h-[760px] flex-col overflow-hidden bg-white font-['Noto_Sans','Open_Sans',sans-serif]">
    <TitleBar />
    <Ribbon />
    <SecurityBar />
    <FormulaBar />
    <Sheet />
    <SheetTabs />
    <StatusBar />
    <Taskbar />
    <SortDialog />
  </div>
);

export default App;
